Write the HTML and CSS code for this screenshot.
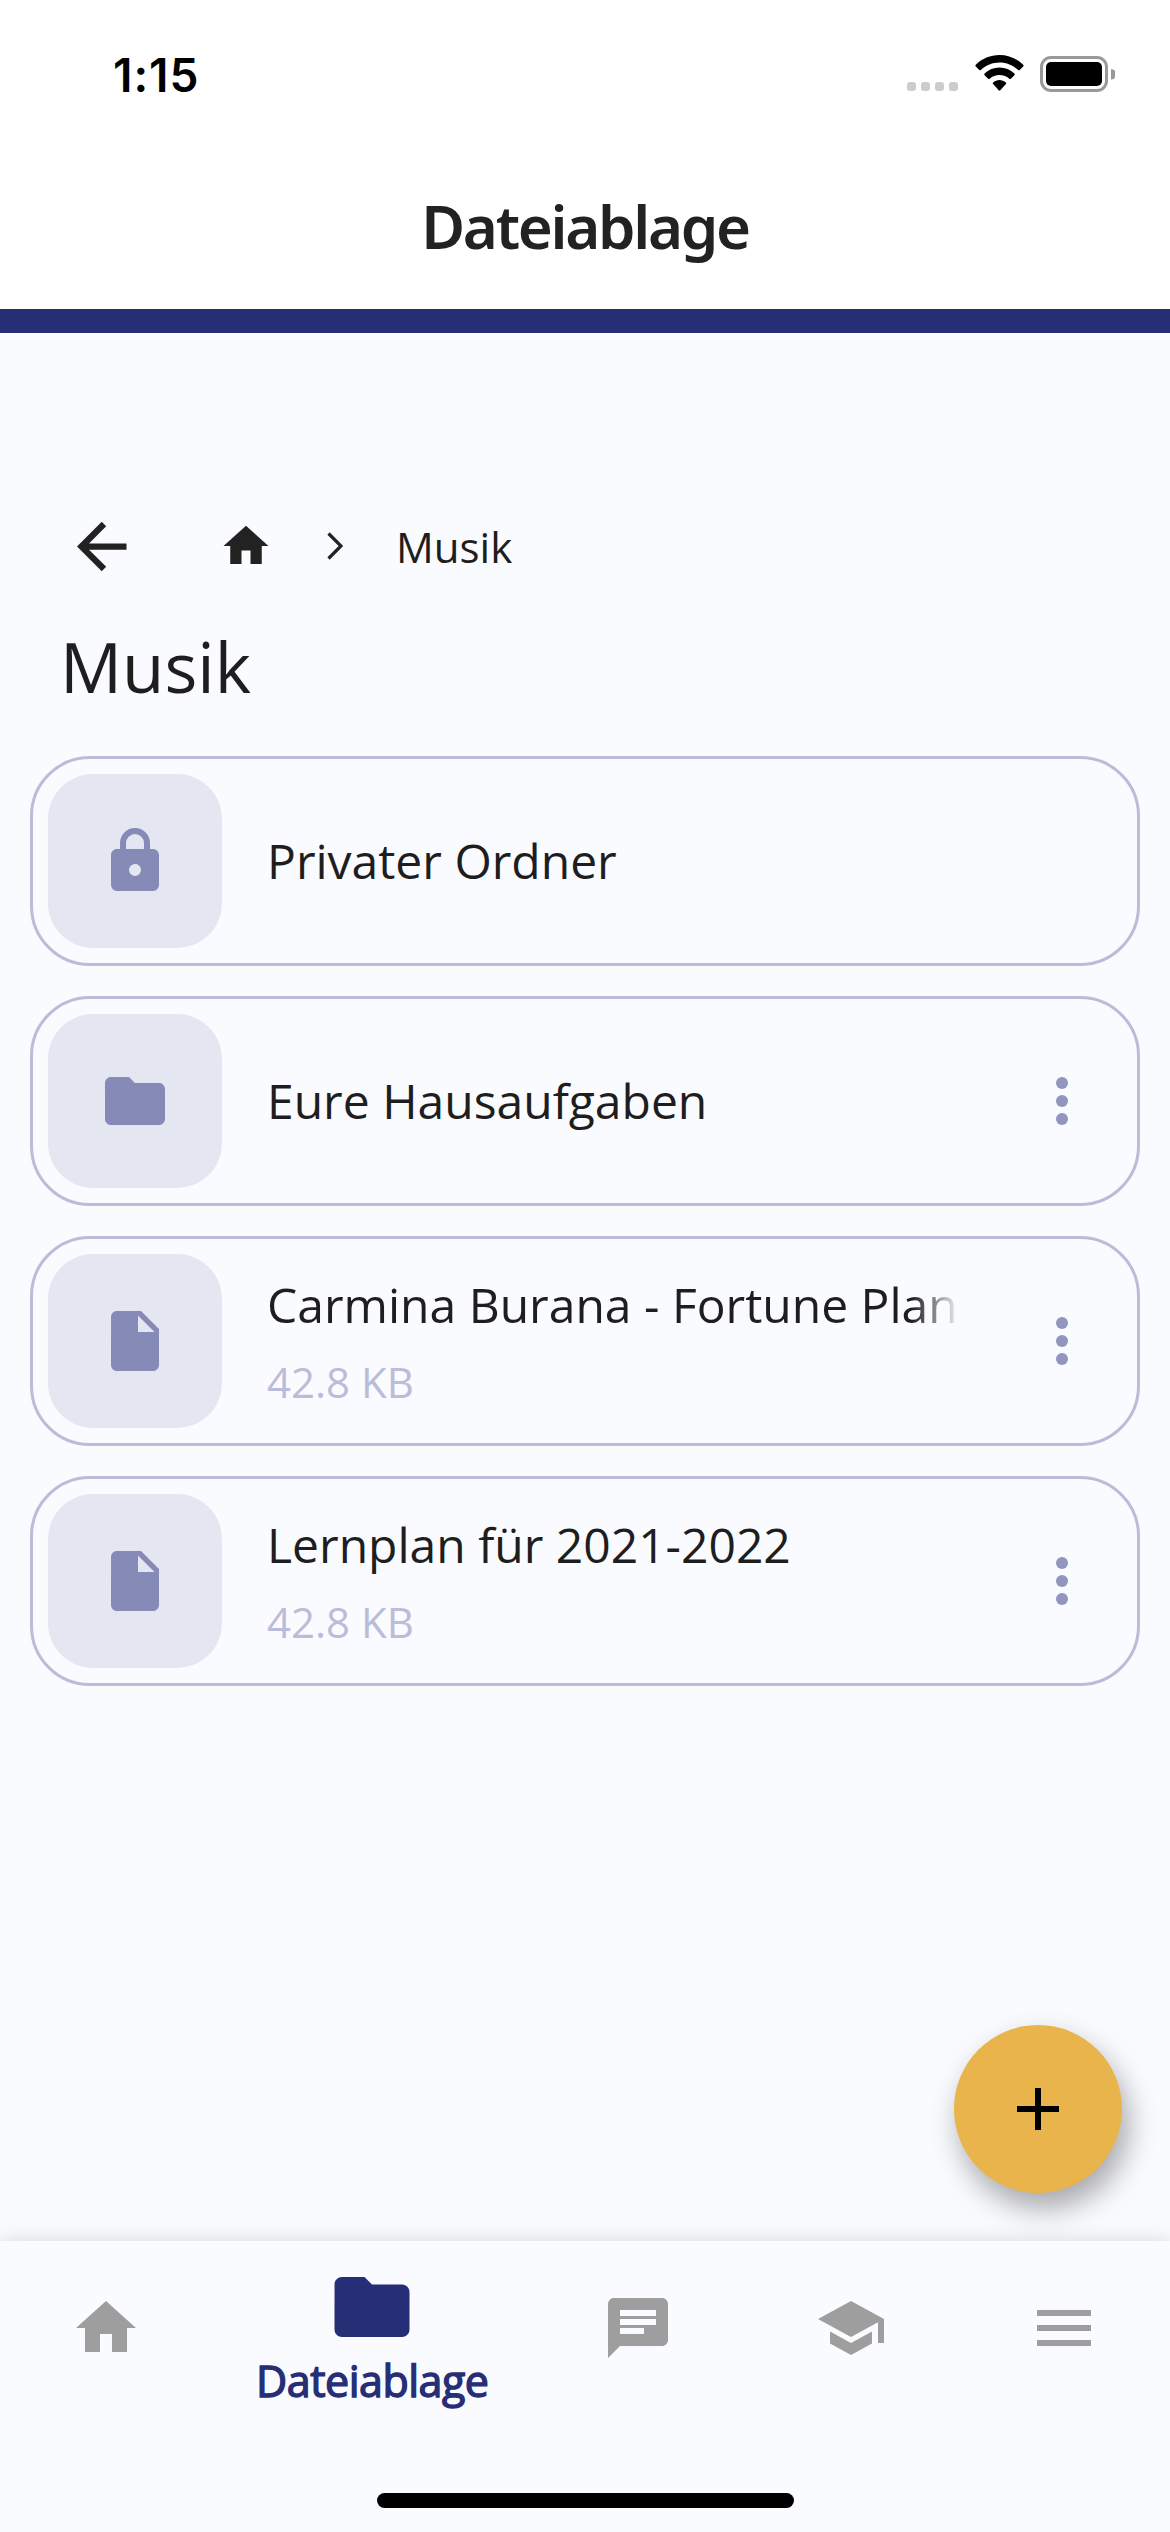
FILE: index.html
```html
<!DOCTYPE html>
<html lang="de">
<head>
<meta charset="utf-8">
<title>Dateiablage</title>
<link rel="stylesheet" href="styles.css">
</head>
<body>
<div class="screen">
  <div class="status-bar">
    <span class="time">1:15</span>
    <div class="status-icons">
      <div class="signal"><i></i><i></i><i></i><i></i></div>
      <svg class="wifi" viewBox="0 0 49 36"><path d="M24.500 0C33.500 0 42 3.500 48.200 9.800Q49 10.700 48.200 11.500L44.700 15Q43.900 15.700 43.100 15C38 10.200 31.500 7.500 24.500 7.500S11 10.200 5.900 15Q5.100 15.700 4.300 15L.8 11.500Q0 10.700.8 9.800C7 3.500 15.500 0 24.500 0Z"/><path d="M24.500 12.500C30.200 12.500 35.500 14.700 39.400 18.500Q40.200 19.400 39.400 20.200L35.900 23.700Q35.100 24.400 34.300 23.700C31.600 21.300 28.200 20 24.500 20S17.400 21.300 14.700 23.700Q13.900 24.400 13.100 23.700L9.600 20.200Q8.800 19.400 9.600 18.500C13.500 14.700 18.800 12.500 24.500 12.500Z"/><path d="M24.500 25C26.900 25 29.100 25.900 30.900 27.400Q31.700 28.200 30.900 29L25.300 35.300Q24.500 36.200 23.700 35.300L18.100 29Q17.300 28.200 18.100 27.400C19.900 25.900 22.100 25 24.500 25Z"/></svg>
      <svg class="battery" viewBox="0 0 75 36"><rect x="1.500" y="1.500" width="65" height="33" rx="9.500" fill="none" stroke="#999" stroke-width="3"/><rect x="6" y="6" width="56" height="24" rx="5"/><path d="M71 13a5.200 5.200 0 0 1 0 10.500Z" fill="#999"/></svg>
    </div>
  </div>
  <header class="app-bar"><h1>Dateiablage</h1></header>
  <main class="content">
    <nav class="breadcrumb">
      <svg class="back" viewBox="0 0 24 24"><path d="M20 11V13H8L13.500 18.500 12.080 19.920 4.160 12 12.080 4.080 13.500 5.500 8 11Z"/></svg>
      <svg class="crumb-home" viewBox="0 0 24 24"><path d="M10 20V14H14V20H19V12H22L12 3 2 12H5V20Z"/></svg>
      <svg class="chevron" viewBox="0 0 16 28"><path d="M1.500 1.500 14 14 1.500 26.500" fill="none" stroke="#222" stroke-width="3.200"/></svg>
      <span class="crumb">Musik</span>
    </nav>
    <h2 class="folder-title">Musik</h2>
    <ul class="files">
      <li class="card">
        <div class="tile"><svg viewBox="0 0 24 24"><path d="M12 17A2 2 0 0 0 14 15C14 13.890 13.100 13 12 13A2 2 0 0 0 10 15A2 2 0 0 0 12 17M18 8A2 2 0 0 1 20 10V20A2 2 0 0 1 18 22H6A2 2 0 0 1 4 20V10C4 8.890 4.900 8 6 8H7V6A5 5 0 0 1 12 1A5 5 0 0 1 17 6V8H18M12 3A3 3 0 0 0 9 6V8H15V6A3 3 0 0 0 12 3Z"/></svg></div>
        <div class="info"><span class="name">Privater Ordner</span></div>
      </li>
      <li class="card">
        <div class="tile"><svg viewBox="0 0 24 24"><path d="M10 4H4c-1.100 0-1.990.9-1.990 2L2 18c0 1.100.9 2 2 2h16c1.100 0 2-.9 2-2V8c0-1.100-.9-2-2-2h-8l-2-2z"/></svg></div>
        <div class="info"><span class="name">Eure Hausaufgaben</span></div>
        <div class="more"><i></i><i></i><i></i></div>
      </li>
      <li class="card">
        <div class="tile"><svg viewBox="0 0 24 24"><path d="M6 2c-1.100 0-1.990.9-1.990 2L4 20c0 1.100.89 2 1.990 2H18c1.100 0 2-.9 2-2V8l-6-6H6zm7 7V3.500L18.500 9H13z"/></svg></div>
        <div class="info"><span class="name name-faded">Carmina Burana - Fortune Plan</span><span class="size">42.8 KB</span></div>
        <div class="more"><i></i><i></i><i></i></div>
      </li>
      <li class="card">
        <div class="tile"><svg viewBox="0 0 24 24"><path d="M6 2c-1.100 0-1.990.9-1.990 2L4 20c0 1.100.89 2 1.990 2H18c1.100 0 2-.9 2-2V8l-6-6H6zm7 7V3.500L18.500 9H13z"/></svg></div>
        <div class="info"><span class="name">Lernplan für 2021-2022</span><span class="size">42.8 KB</span></div>
        <div class="more"><i></i><i></i><i></i></div>
      </li>
    </ul>
  </main>
  <button class="fab" aria-label="Hinzufügen"><svg viewBox="0 0 42 42"><path d="M18 0h6v18h18v6H24v18h-6V24H0v-6h18z"/></svg></button>
  <footer class="bottom">
    <nav class="tabs">
      <a class="tab"><svg viewBox="0 0 24 24"><path d="M10 20V14H14V20H19V12H22L12 3 2 12H5V20Z"/></svg></a>
      <a class="tab tab-active"><svg viewBox="0 0 24 24"><path d="M10 4H4c-1.100 0-1.990.9-1.990 2L2 18c0 1.100.9 2 2 2h16c1.100 0 2-.9 2-2V8c0-1.100-.9-2-2-2h-8l-2-2z"/></svg><span>Dateiablage</span></a>
      <a class="tab"><svg viewBox="0 0 24 24"><path d="M20 2H4c-1.100 0-1.990.9-1.990 2L2 22l4-4h14c1.100 0 2-.9 2-2V4c0-1.100-.9-2-2-2zM6 9h12v2H6V9zm8 5H6v-2h8v2zm4-6H6V6h12v2z"/></svg></a>
      <a class="tab"><svg viewBox="0 0 24 24"><path d="M5 13.180v4L12 21l7-3.820v-4L12 17l-7-3.820zM12 3L1 9l11 6 9-4.910V17h2V9L12 3z"/></svg></a>
      <a class="tab"><svg viewBox="0 0 24 24"><path d="M3 18h18v-2H3v2zm0-5h18v-2H3v2zm0-7v2h18V6H3z"/></svg></a>
    </nav>
    <div class="home-indicator"></div>
  </footer>
</div>
</body>
</html>
```
FILE: styles.css
```css
* { box-sizing: border-box; margin: 0; padding: 0; }
body { background: #fafbff; font-family: "Open Sans", "Noto Sans", sans-serif; color: #1e1e1e; }
svg { display: block; flex: none; }

.screen {
  position: relative;
  display: flex;
  flex-direction: column;
  width: 1170px;
  height: 2532px;
  overflow: hidden;
}

.status-bar {
  display: flex;
  justify-content: space-between;
  height: 141px;
  padding: 55px 55px 0 113px;
  background: #fff;
}
.time {
  font: 600 46px/40px Inter, sans-serif;
  letter-spacing: 1px;
  color: #000;
}
.status-icons { display: flex; align-items: flex-start; height: 37px; }
.signal { display: flex; gap: 5px; margin: 27px 17px 0 0; }
.signal i { width: 9px; height: 9px; border-radius: 3px; background: #ccc; }
.wifi { width: 49px; height: 36px; margin-right: 16px; }
.battery { width: 75px; height: 36px; margin-top: 1px; }

.app-bar {
  display: flex;
  justify-content: center;
  height: 192px;
  padding-top: 41px;
  background: #fff;
  border-bottom: 24px solid #262e76;
}
.app-bar h1 {
  font-family: "Noto Sans", "Open Sans", sans-serif;
  font-size: 60px;
  line-height: 88px;
  font-weight: 600;
  letter-spacing: -2.3px;
  color: #222;
}

.content { flex: 1; padding: 171px 30px 0; }
.breadcrumb { display: flex; align-items: center; height: 84px; padding-left: 34px; fill: #222; }
.back { width: 75px; height: 75px; margin-right: 80px; }
.crumb-home { width: 54px; height: 54px; margin-right: 54px; }
.chevron { width: 16px; height: 28px; margin-right: 53px; }
.crumb { font-size: 42px; line-height: 58px; padding-top: 1px; }
.folder-title {
  height: 168px;
  padding: 31px 0 0 30px;
  font-size: 69px;
  line-height: 94px;
  font-weight: 400;
}

.files { display: flex; flex-direction: column; gap: 30px; list-style: none; }
.card {
  display: flex;
  align-items: center;
  height: 210px;
  padding: 15px;
  border: 3px solid #babcd9;
  border-radius: 60px;
}
.tile {
  display: flex;
  align-items: center;
  justify-content: center;
  width: 174px;
  height: 174px;
  border-radius: 45px;
  background: #e4e6f2;
  fill: #868ab6;
}
.tile svg { width: 72px; height: 72px; }
.info { display: flex; flex-direction: column; gap: 16px; width: 693px; margin: -1px 0 0 45px; }
.name { font-size: 48px; line-height: 65px; white-space: nowrap; overflow: hidden; }
.name-faded {
  -webkit-mask-image: linear-gradient(to right, #000 645px, transparent 693px);
  mask-image: linear-gradient(to right, #000 645px, transparent 693px);
}
.size { font-size: 42px; line-height: 57px; color: #babcd9; }
.more { display: flex; flex-direction: column; gap: 6px; margin-left: 96px; }
.more i { width: 12px; height: 12px; border-radius: 50%; background: #9295be; }

.fab {
  position: absolute;
  right: 48px;
  bottom: 339px;
  display: flex;
  align-items: center;
  justify-content: center;
  width: 168px;
  height: 168px;
  border: 0;
  border-radius: 50%;
  background: #e9b44c;
  box-shadow: 6px 15px 30px rgba(0, 0, 0, 0.34);
}
.fab svg { width: 42px; height: 42px; }

.bottom {
  display: flex;
  flex-direction: column;
  align-items: center;
  height: 291px;
  background: #fafbff;
  box-shadow: 0 0 18px rgba(0, 0, 0, 0.15);
}
.tabs { display: flex; width: 100%; height: 252px; }
.tab { display: flex; flex: 1; flex-direction: column; align-items: center; padding-top: 51px; fill: #9e9e9e; }
.tab svg { width: 72px; height: 72px; }
.tab-active { flex: 1.5; padding-top: 21px; fill: #262e76; color: #262e76; }
.tab-active svg { width: 90px; height: 90px; }
.tab-active span {
  font-size: 43px;
  line-height: 58px;
  letter-spacing: -0.5px;
  -webkit-text-stroke: 1.4px #262e76;
}
.home-indicator { width: 417px; height: 15px; border-radius: 8px; background: #000; }
```
